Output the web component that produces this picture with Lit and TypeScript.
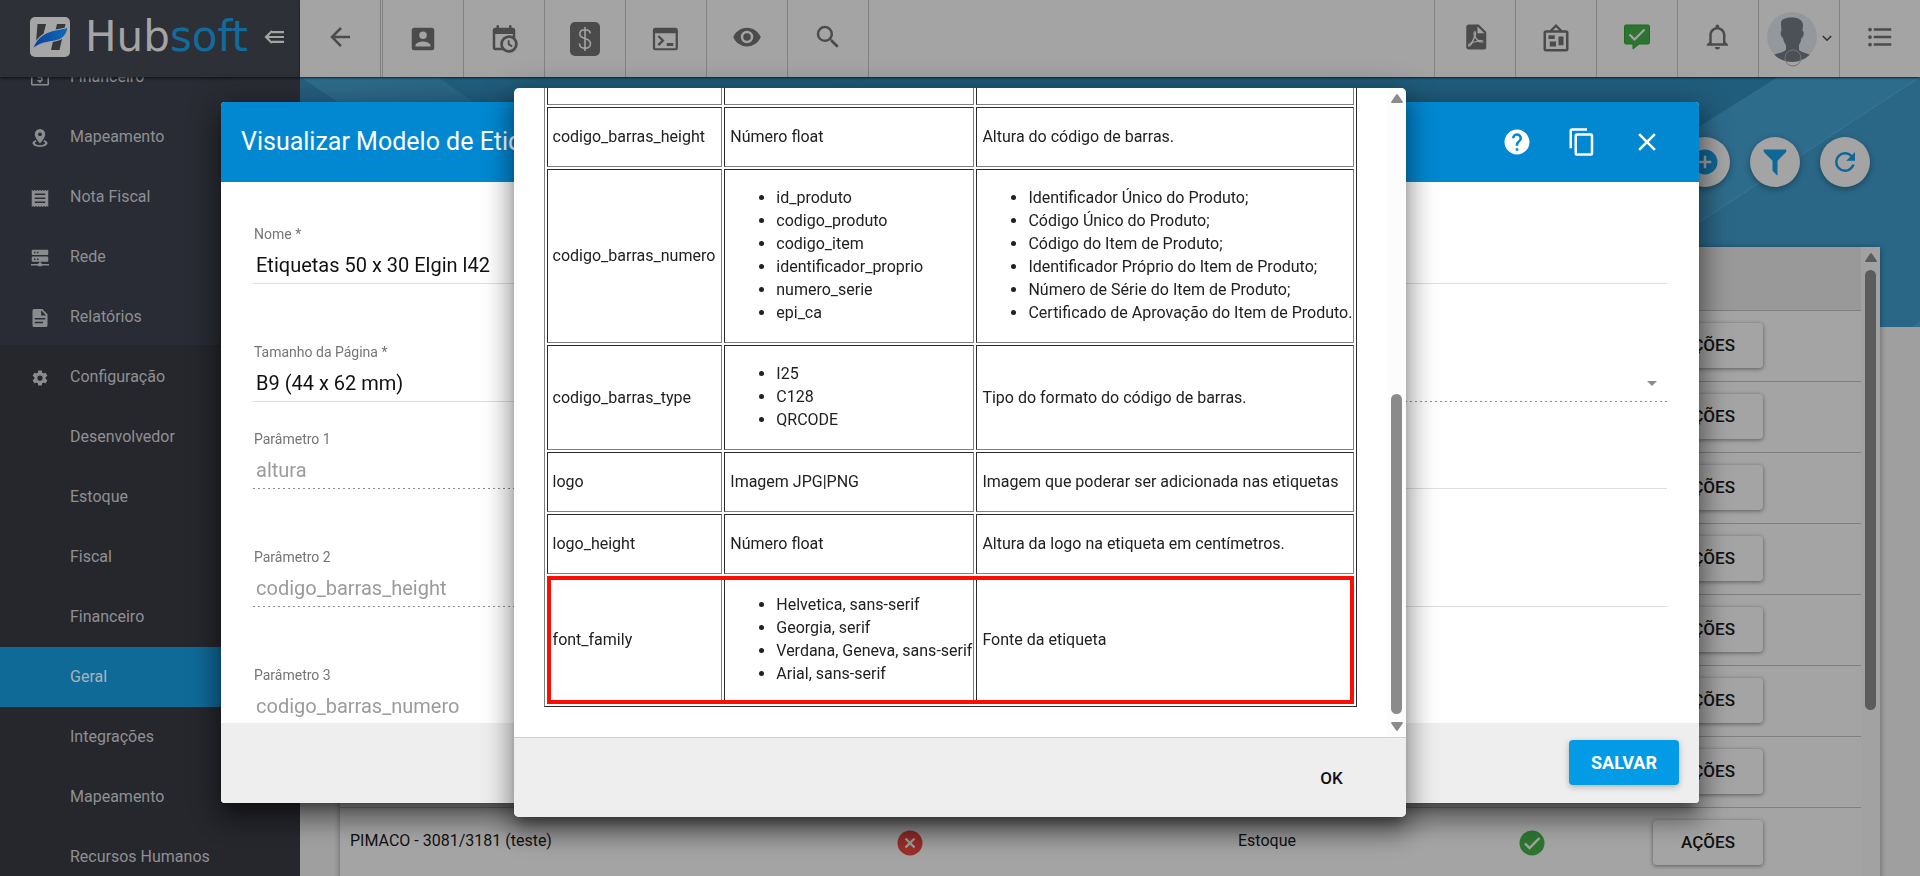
import { LitElement, html, css, svg, nothing } from "lit";
import { customElement, property } from "lit/decorators.js";

const ICONS: Record<string, string> = {
  arrowLeft: "M20,11V13H8L13.5,18.5L12.08,19.92L4.16,12L12.08,4.08L13.5,5.5L8,11H20Z",
  accountBox: "M6,17C6,15 10,13.9 12,13.9C14,13.9 18,15 18,17V18H6M15,9A3,3 0 0,1 12,12A3,3 0 0,1 9,9A3,3 0 0,1 12,6A3,3 0 0,1 15,9M3,5V19A2,2 0 0,0 5,21H19A2,2 0 0,0 21,19V5A2,2 0 0,0 19,3H5C3.89,3 3,3.9 3,5Z",
  calendarClock: "M15,13H16.5V15.82L18.94,17.23L18.19,18.53L15,16.69V13M19,8H5V19H9.67C9.24,18.09 9,17.07 9,16A7,7 0 0,1 16,9C17.07,9 18.09,9.24 19,9.67V8M5,21C3.89,21 3,20.1 3,19V5C3,3.89 3.89,3 5,3H6V1H8V3H16V1H18V3H19A2,2 0 0,1 21,5V11.1C22.24,12.36 23,14.09 23,16A7,7 0 0,1 16,23C14.09,23 12.36,22.24 11.1,21H5M16,11.15A4.85,4.85 0 0,0 11.15,16C11.15,18.68 13.32,20.85 16,20.85A4.85,4.85 0 0,0 20.85,16C20.85,13.32 18.68,11.15 16,11.15Z",
  console: "M3.500,3H19.500A2,2 0 0,1 21.500,5V19A2,2 0 0,1 19.500,21H3.500A2,2 0 0,1 1.500,19V5A2,2 0 0,1 3.500,3M3.300,7.4V19.300H19.700V7.4H3.300M5.2,10.2L6.5,8.9L10.8,13.2L6.5,17.5L5.2,16.2L8.2,13.2L5.2,10.2M12.6,15.2H17.8V17.5H12.6V15.2Z",
  eye: "M12,9A3,3 0 0,0 9,12A3,3 0 0,0 12,15A3,3 0 0,0 15,12A3,3 0 0,0 12,9M12,17A5,5 0 0,1 7,12A5,5 0 0,1 12,7A5,5 0 0,1 17,12A5,5 0 0,1 12,17M12,4.5C7,4.5 2.73,7.61 1,12C2.73,16.39 7,19.5 12,19.5C17,19.5 21.27,16.39 23,12C21.27,7.61 17,4.5 12,4.5Z",
  magnify: "M9.5,3A6.5,6.5 0 0,1 16,9.5C16,11.11 15.41,12.59 14.44,13.73L14.71,14H15.5L20.5,19L19,20.5L14,15.5V14.71L13.73,14.44C12.59,15.41 11.11,16 9.5,16A6.5,6.5 0 0,1 3,9.5A6.5,6.5 0 0,1 9.5,3M9.5,5C7,5 5,7 5,9.5C5,12 7,14 9.5,14C12,14 14,12 14,9.5C14,7 12,5 9.5,5Z",
  filePdf: "M14,9H19.5L14,3.5V9M7,2H15L21,8V20A2,2 0 0,1 19,22H7C5.89,22 5,21.1 5,20V4A2,2 0 0,1 7,2M11.93,12.44C12.34,13.34 12.86,14.08 13.46,14.59L13.87,14.91C13,15.07 11.8,15.35 10.53,15.84V15.84L10.42,15.88L10.92,14.84C11.37,13.97 11.7,13.18 11.93,12.44M18.41,16.25C18.59,16.07 18.68,15.84 18.69,15.59C18.72,15.39 18.67,15.2 18.57,15.04C18.28,14.57 17.53,14.35 16.29,14.35L15,14.42L14.13,13.84C13.5,13.32 12.93,12.41 12.53,11.28L12.57,11.14C12.9,9.81 13.21,8.2 12.55,7.54C12.39,7.38 12.17,7.3 11.94,7.3H11.7C11.33,7.3 11,7.69 10.91,8.07C10.54,9.4 10.76,10.13 11.13,11.34V11.35C10.88,12.23 10.56,13.25 10.05,14.28L9.09,16.08L8.2,16.57C7,17.32 6.43,18.16 6.32,18.69C6.28,18.88 6.3,19.05 6.37,19.23L6.4,19.28L6.88,19.59L7.32,19.7C8.13,19.7 9.05,18.75 10.29,16.63L10.47,16.56C11.5,16.23 12.78,16 14.5,15.81C15.53,16.32 16.74,16.55 17.5,16.55C17.94,16.55 18.24,16.44 18.41,16.25M18,15.54L18.09,15.65C18.08,15.75 18.05,15.76 18,15.78H17.96L17.77,15.8C17.31,15.8 16.6,15.61 15.87,15.29C15.96,15.19 16,15.19 16.1,15.19C17.5,15.19 17.9,15.44 18,15.54M8.83,17C8.18,18.19 7.59,18.85 7.14,19C7.19,18.62 7.64,17.96 8.35,17.31L8.83,17M11.85,10.09C11.62,9.19 11.61,8.46 11.78,8.04L11.85,7.92L12,7.97C12.17,8.21 12.19,8.53 12.09,9.07L12.06,9.23L11.9,10.05L11.85,10.09Z",
  bulletinBoard: "M12.04,2.5L9.53,5H14.53L12.04,2.5M4,7V20H20V7H4M12,0L17,5V5H20A2,2 0 0,1 22,7V20A2,2 0 0,1 20,22H4A2,2 0 0,1 2,20V7A2,2 0 0,1 4,5H7V5L12,0M7,18V14H12V18H7M14,17V10H18V17H14M6,12V9H11V12H6Z",
  bell: "M16,17H7V10.5C7,8 9,6 11.5,6C14,6 16,8 16,10.5M18,16V10.5C18,7.43 15.86,4.86 13,4.18V3.5A1.5,1.5 0 0,0 11.5,2A1.5,1.5 0 0,0 10,3.5V4.18C7.13,4.86 5,7.43 5,10.5V16L3,18V19H20V18M11.5,22A2,2 0 0,0 13.5,20H9.5A2,2 0 0,0 11.5,22Z",
  list: "M7,5H21V7H7V5M7,13V11H21V13H7M4,4.5A1.5,1.5 0 0,1 5.5,6A1.5,1.5 0 0,1 4,7.5A1.5,1.5 0 0,1 2.5,6A1.5,1.5 0 0,1 4,4.5M4,10.5A1.5,1.5 0 0,1 5.5,12A1.5,1.5 0 0,1 4,13.5A1.5,1.5 0 0,1 2.5,12A1.5,1.5 0 0,1 4,10.5M7,19V17H21V19H7M4,16.5A1.5,1.5 0 0,1 5.5,18A1.5,1.5 0 0,1 4,19.5A1.5,1.5 0 0,1 2.5,18A1.5,1.5 0 0,1 4,16.5Z",
  help: "M15.07,11.25L14.17,12.17C13.45,12.89 13,13.5 13,15H11V14.5C11,13.39 11.45,12.39 12.17,11.67L13.41,10.41C13.78,10.05 14,9.55 14,9C14,7.89 13.1,7 12,7A2,2 0 0,0 10,9H8A4,4 0 0,1 12,5A4,4 0 0,1 16,9C16,9.88 15.64,10.67 15.07,11.25M13,19H11V17H13M12,2A10,10 0 0,0 2,12A10,10 0 0,0 12,22A10,10 0 0,0 22,12C22,6.47 17.5,2 12,2Z",
  copy: "M19,21H8V7H19M19,5H8A2,2 0 0,0 6,7V21A2,2 0 0,0 8,23H19A2,2 0 0,0 21,21V7A2,2 0 0,0 19,5M16,1H4A2,2 0 0,0 2,3V17H4V3H16V1Z",
  close: "M19,6.41L17.59,5L12,10.59L6.41,5L5,6.41L10.59,12L5,17.59L6.41,19L12,13.41L17.59,19L19,17.59L13.41,12L19,6.41Z",
  plusCircle: "M17,13H13V17H11V13H7V11H11V7H13V11H17M12,2A10,10 0 0,0 2,12A10,10 0 0,0 12,22A10,10 0 0,0 22,12A10,10 0 0,0 12,2Z",
  filter: "M3,2H21V2H21V4H20.92L14,10.92V22.91L10,18.91V10.91L3.09,4H3V2Z",
  refresh: "M17.65,6.35C16.2,4.9 14.21,4 12,4A8,8 0 0,0 4,12A8,8 0 0,0 12,20C15.73,20 18.84,17.45 19.73,14H17.65C16.83,16.33 14.61,18 12,18A6,6 0 0,1 6,12A6,6 0 0,1 12,6C13.66,6 15.14,6.69 16.22,7.78L13,11H20V4L17.65,6.35Z",
  cash: "M2,3H4.5V5H2V20H22V5H19.5V3H22A2,2 0 0,1 24,5V20A2,2 0 0,1 22,22H2A2,2 0 0,1 0,20V5A2,2 0 0,1 2,3M11,4H13V6H15.5V8H10.5V10H14A1.5,1.5 0 0,1 15.5,11.5V15A1.5,1.5 0 0,1 14,16.5H13V18.5H11V16.5H8.5V14.5H13.5V12.2H10A1.5,1.5 0 0,1 8.5,10.7V7.5A1.5,1.5 0 0,1 10,6H11V4Z",
  mapPin: "M12,0A7,7 0 0,1 19,7C19,12 12,19.2 12,19.2C12,19.2 5,12 5,7A7,7 0 0,1 12,0M12,4.5A2.6,2.6 0 0,0 9.4,7.1A2.6,2.6 0 0,0 12,9.7A2.6,2.6 0 0,0 14.6,7.1A2.6,2.6 0 0,0 12,4.5M6.2,14.5L7.6,16.6C6.2,17.2 5.2,18 5.2,18.8C5.2,20.4 8.2,21.7 12,21.7C15.8,21.7 18.8,20.4 18.8,18.8C18.8,18 17.8,17.2 16.4,16.6L17.8,14.5C20.5,15.5 22,17 22,18.8C22,21.7 17.5,24 12,24C6.5,24 2,21.7 2,18.8C2,17 3.5,15.5 6.2,14.5Z",
  receipt: "M1,24V1L2.9,2.5L4.7,1L6.5,2.5L8.4,1L10.2,2.5L12,1L13.8,2.5L15.6,1L17.5,2.5L19.3,1L21.1,2.5L23,1V24L21.1,22.5L19.3,24L17.5,22.5L15.6,24L13.8,22.5L12,24L10.2,22.5L8.4,24L6.5,22.5L4.7,24L2.9,22.5M5,6V8H19V6H5M5,11.3V13.3H19V11.3H5M5,16.6V18.6H19V16.6H5Z",
  server: "M13,19H14A1,1 0 0,1 15,20H24V22H15A1,1 0 0,1 14,23H10A1,1 0 0,1 9,22H0V20H9A1,1 0 0,1 10,19H11V17H2A1,1 0 0,1 1,16V11A1,1 0 0,1 2,10H22A1,1 0 0,1 23,11V16A1,1 0 0,1 22,17H13V19M2,1H22A1,1 0 0,1 23,2V7A1,1 0 0,1 22,8H2A1,1 0 0,1 1,7V2A1,1 0 0,1 2,1M8,5.5H10V3.5H8V5.5M8,14.5H10V12.5H8V14.5M4,3.5V5.5H6V3.5H4M4,12.5V14.5H6V12.5H4Z",
  document: "M4,0H15L22,7V22A2,2 0 0,1 20,24H4A2,2 0 0,1 2,22V2A2,2 0 0,1 4,0M13.5,1.8V8.5H20.2L13.5,1.8M5,12V14H19V12H5M5,17V19H16V17H5Z",
  cog: "M12,15.5A3.5,3.5 0 0,1 8.5,12A3.5,3.5 0 0,1 12,8.5A3.5,3.5 0 0,1 15.5,12A3.5,3.5 0 0,1 12,15.5M19.43,12.97C19.47,12.65 19.5,12.33 19.5,12C19.5,11.67 19.47,11.34 19.43,11L21.54,9.37C21.73,9.22 21.78,8.95 21.66,8.73L19.66,5.27C19.54,5.05 19.27,4.96 19.05,5.05L16.56,6.05C16.04,5.66 15.5,5.32 14.87,5.07L14.5,2.42C14.46,2.18 14.25,2 14,2H10C9.75,2 9.54,2.18 9.5,2.42L9.13,5.07C8.5,5.32 7.96,5.66 7.44,6.05L4.95,5.05C4.73,4.96 4.46,5.05 4.34,5.27L2.34,8.73C2.21,8.95 2.27,9.22 2.46,9.37L4.57,11C4.53,11.34 4.5,11.67 4.5,12C4.5,12.33 4.53,12.65 4.57,12.97L2.46,14.63C2.27,14.78 2.21,15.05 2.34,15.27L4.34,18.73C4.46,18.95 4.73,19.03 4.95,18.95L7.44,17.94C7.96,18.34 8.5,18.68 9.13,18.93L9.5,21.58C9.54,21.82 9.75,22 10,22H14C14.25,22 14.46,21.82 14.5,21.58L14.87,18.93C15.5,18.67 16.04,18.34 16.56,17.94L19.05,18.95C19.27,19.03 19.54,18.95 19.66,18.73L21.66,15.27C21.78,15.05 21.73,14.78 21.54,14.63L19.43,12.97Z",
};

/* A single-path 24-unit glyph that takes its colour and size from the host. */
@customElement("hs-icon")
class HsIcon extends LitElement {
  @property() name = "";
  static styles = css`
    :host { display: block; width: 30px; height: 30px; flex: none; }
    svg { display: block; width: 100%; height: 100%; overflow: visible; }
  `;
  render() {
    return html`<svg viewBox="0 0 24 24" aria-hidden="true">
      <path fill="currentColor" fill-rule="evenodd" d=${ICONS[this.name] ?? ""}></path>
    </svg>`;
  }
}

/* Classic scrollbar gutter; the thumb position is given in percent of the rail. */
@customElement("hs-scrollbar")
class HsScrollbar extends LitElement {
  @property({ type: Number }) start = 0;
  @property({ type: Number }) size = 50;
  static styles = css`
    :host { display: flex; flex-direction: column; align-items: center; flex: none; width: 19px; box-sizing: border-box; padding: 6px 0; gap: 8px; color: #8b8b8b; }
    svg { display: block; width: 12px; height: 9px; flex: none; fill: currentColor; }
    .rail { flex: 1; width: 11px; }
    .space { display: block; }
    .thumb { border-radius: 6px; background: currentColor; }
  `;
  render() {
    return html`
      <svg viewBox="0 0 12 9"><path d="M5 .8a1.2 1.2 0 0 1 2 0l4.8 7q.4 1.2-.8 1.2H1q-1.200 0-.8-1.200z"></path></svg>
      <div class="rail">
        <div class="space" style="height:${this.start}%"></div>
        <div class="thumb" style="height:${this.size}%"></div>
      </div>
      <svg viewBox="0 0 12 9"><path d="M5 8.200a1.200 1.200 0 0 0 2 0l4.800-7Q12.200 0 11 0H1Q-.2 0 .2 1.200z"></path></svg>
    `;
  }
}

@customElement("hs-sidebar")
class HsSidebar extends LitElement {
  static styles = css`
    :host { display: flex; flex-direction: column; width: 300px; flex: none; height: 100vh; overflow: hidden; background: #292c34; color: #8f9092; }
    .brand { display: flex; align-items: center; height: 77px; flex: none; box-sizing: border-box; padding: 0 16px 3px 30px; background: #2e3037; position: relative; z-index: 1; box-shadow: 0 1px 3px rgba(0,0,0,.7); }
    .mark { width: 40px; height: 40px; flex: none; }
    .name { flex: 1; padding-left: 15px; font: 42px/40px "DejaVu Sans", sans-serif; color: #a4a4a4; }
    .name span { color: #116b9b; }
    .fold { border: 0; padding: 0; background: none; color: #a4a4a4; width: 20px; height: 16px; flex: none; }
    .fold svg { display: block; }
    nav { margin-top: -30px; }
    a { display: flex; align-items: center; box-sizing: border-box; height: 60px; padding-left: 30px; gap: 20px; color: inherit; text-decoration: none; font-size: 16px; line-height: 20px; }
    a hs-icon { width: 18px; height: 18px; margin: 2px 1px 0; color: #8b8c8e; }
    a.sub { padding-left: 70px; }
    a.active { background: #106a98; color: #a9b4b9; }
    .group { background: #26272d; box-shadow: 0 -1px 2px rgba(0,0,0,.25); }
  `;
  render() {
    const top = [["cash", "Financeiro"], ["mapPin", "Mapeamento"], ["receipt", "Nota Fiscal"], ["server", "Rede"], ["document", "Relatórios"]];
    const sub = ["Desenvolvedor", "Estoque", "Fiscal", "Financeiro", "Geral", "Integrações", "Mapeamento", "Recursos Humanos"];
    return html`
      <div class="brand">
        <svg class="mark" viewBox="0 0 40 40" aria-hidden="true">
          <defs><linearGradient id="wave"><stop offset="0" stop-color="#0c3f9c"></stop><stop offset="1" stop-color="#0d6cb8"></stop></linearGradient></defs>
          <rect width="40" height="40" rx="5" fill="#a6a6a6"></rect>
          <path fill="#36373a" d="M7.500 7h8.500l-3 12-7 6zM27 7h8.500l-6 26H21z"></path>
          <path fill="url(#wave)" stroke="#a6a6a6" stroke-width="1.200" d="M2 33.500C5 23 13 16 23 13.500C29 12 34 12 38 10C37.500 16 35 20 30 22.500C20 26 8 25 2 33.500z"></path>
        </svg>
        <div class="name">Hub<span>soft</span></div>
        <button class="fold" aria-label="Recolher menu">
          <svg width="20" height="16" viewBox="0 0 20 16" fill="none" stroke="currentColor" stroke-width="2.200">
            <path d="M8 2L2 8l6 6M8 3.200h12M3 8h17M8 12.800h12"></path>
          </svg>
        </button>
      </div>
      <nav>
        ${top.map(([icon, label]) => html`<a href="#"><hs-icon name=${icon}></hs-icon>${label}</a>`)}
        <div class="group">
          <a href="#"><hs-icon name="cog"></hs-icon>Configuração</a>
          ${sub.map((label) => html`<a href="#" class=${label === "Geral" ? "sub active" : "sub"}>${label}</a>`)}
        </div>
      </nav>
    `;
  }
}

@customElement("hs-topbar")
class HsTopbar extends LitElement {
  static styles = css`
    :host { display: flex; height: 77px; flex: none; background: #a4a4a4; color: #4b4b4b; position: relative; z-index: 1; box-shadow: 0 1px 2px rgba(0,20,35,.8); }
    button { display: flex; align-items: center; justify-content: center; box-sizing: border-box; width: 81px; height: 77px; padding: 0; border: 0; background: none; color: inherit; border-right: 1px solid #828282; }
    .back { width: 83px; border-right: 3px double #828282; }
    .spacer { flex: 1; }
    .right button { border-right: 0; border-left: 1px solid #828282; }
    .right { display: flex; }
    .lift { margin-bottom: 3px; }
    .user { gap: 5px; }
    .chevron { flex: none; }
  `;
  render() {
    return html`
      <button class="back" aria-label="Voltar"><hs-icon class="lift" name="arrowLeft"></hs-icon></button>
      <button aria-label="Clientes"><hs-icon name="accountBox"></hs-icon></button>
      <button aria-label="Agenda"><hs-icon name="calendarClock"></hs-icon></button>
      <button aria-label="Financeiro">
        <svg width="30" height="36" viewBox="0 0 30 36" fill="none">
          <rect y="1" width="30" height="34" rx="5" fill="#4b4b4b"></rect>
          <path stroke="#a4a4a4" stroke-width="1.600" d="M15 6v24M20.200 12.500C20.200 9.800 18 8.700 15 8.700S9.800 10 9.800 12.900C9.800 19 20.500 16 20.500 22.600C20.500 25.600 18 27.300 15 27.300S9.400 25.600 9.400 22.600"></path>
        </svg>
      </button>
      <button aria-label="Console"><hs-icon name="console"></hs-icon></button>
      <button aria-label="Visualizar"><hs-icon class="lift" name="eye"></hs-icon></button>
      <button aria-label="Pesquisar"><hs-icon class="lift" name="magnify"></hs-icon></button>
      <div class="spacer"></div>
      <div class="right">
        <button aria-label="PDF"><hs-icon class="lift" name="filePdf"></hs-icon></button>
        <button aria-label="Mural"><hs-icon name="bulletinBoard"></hs-icon></button>
        <button aria-label="Status">
          <svg class="lift" width="26" height="26" viewBox="0 0 26 26">
            <path fill="#2d7431" stroke="#1b6a20" d="M2 1h22a1.500 1.500 0 0 1 1.500 1.500v16A1.500 1.500 0 0 1 24 20h-9l-6 5v-5H2A1.500 1.500 0 0 1 .5 18.500v-16A1.500 1.500 0 0 1 2 1z"></path>
            <path fill="none" stroke="#a4a4a4" stroke-width="2.200" d="M5.500 10.500l5 5L20.500 5.500"></path>
          </svg>
        </button>
        <button aria-label="Notificações"><hs-icon class="lift" name="bell"></hs-icon></button>
        <button class="user" aria-label="Usuário">
          <svg width="50" height="56" viewBox="0 0 50 56">
            <defs><clipPath id="face"><circle cx="25" cy="26" r="25"></circle></clipPath></defs>
            <circle cx="25" cy="26" r="25" fill="#94979b"></circle>
            <path clip-path="url(#face)" fill="#4c5157" d="M14 12C14 8 19 6.500 25 6.500S36 9 36 14L35.500 20C37.500 20 37 26 34.500 27C34 30 33.200 32 32 34V39C35 42 42 42 46 46V56H4V46C8 42 16 42 19 39V34C17.500 32 16.500 30 16 27C13.500 26 13 20 14.500 20Z"></path>
            <circle cx="26" cy="47" r="8" fill="none" stroke="#77736c"></circle>
          </svg>
          <svg class="chevron" width="10" height="7" viewBox="0 0 10 7"><path fill="none" stroke="#333" stroke-width="1.600" d="M.8 1l4.200 4.200L9.200 1"></path></svg>
        </button>
        <button aria-label="Lista"><hs-icon class="lift" name="list"></hs-icon></button>
      </div>
    `;
  }
}

/* Listing page behind the dialogs. */
@customElement("hs-listing")
class HsListing extends LitElement {
  static styles = css`
    :host { display: flex; flex-direction: column; flex: 1; min-height: 0; background: #9f9f9f; position: relative; overflow: hidden; color: #111; }
    .banner { position: absolute; inset: 0 0 auto 0; width: 100%; height: 250px; }
    .tools { display: flex; justify-content: flex-end; gap: 20px; padding: 60px 50px; position: relative; }
    .tools button { display: flex; align-items: center; justify-content: center; width: 50px; height: 50px; padding: 0; border: 0; border-radius: 50%; background: #a4a4a4; color: #0f6798; box-shadow: 0 2px 6px rgba(0,0,0,.35); }
    .card { display: flex; flex: 1; min-height: 0; margin: 0 40px -20px; background: #a4a4a4; position: relative; box-shadow: 0 1px 6px rgba(0,0,0,.4); }
    .view { flex: 1; overflow: hidden; }
    hs-scrollbar { color: #5c5c5c; background: #a2a2a2; }
    table { width: 100%; border-collapse: separate; border-spacing: 0; table-layout: fixed; font-size: 16px; line-height: 20px; }
    th { height: 64px; box-sizing: border-box; padding: 0; background: #999; border-bottom: 1px solid #7f7f7f; }
    td { height: 71px; box-sizing: border-box; padding: 0 10px 4px; border-bottom: 1px solid #7f7f7f; }
    .name { width: 252px; } .kind { width: 204px; } .state { width: 200px; } .act { width: 229px; }
    .mid { text-align: center; padding-bottom: 0; }
    .mid svg { display: inline-block; vertical-align: middle; }
    .go { padding: 0 21px 2px; }
    .go button { display: block; width: 110px; height: 45px; padding: 0; border: 0; border-radius: 4px; background: #a4a4a4; color: #111; font: 500 17px/20px Roboto, sans-serif; box-shadow: 0 1px 4px rgba(0,0,0,.45); }
  `;
  render() {
    const blank = { name: "", kind: "" };
    const items = [blank, blank, blank, blank, blank, blank, blank, { name: "PIMACO - 3081/3181 (teste)", kind: "Estoque" }];
    const disc = (fill: string, d: string) => svg`<svg width="26" height="26" viewBox="0 0 26 26"><circle cx="13" cy="13" r="12.500" fill=${fill}></circle><path fill="none" stroke="#a4a4a4" stroke-width="2.400" d=${d}></path></svg>`;
    return html`
      <svg class="banner" viewBox="0 0 1620 250" preserveAspectRatio="none" aria-hidden="true">
        <defs>
          <linearGradient id="sea"><stop offset="0" stop-color="#205f7e"></stop><stop offset=".9" stop-color="#205d7d"></stop></linearGradient>
          <linearGradient id="lit"><stop offset="0" stop-color="#2f6d8c"></stop><stop offset="1" stop-color="#235f7e"></stop></linearGradient>
        </defs>
        <rect width="1620" height="250" fill="url(#sea)"></rect>
        <path fill="url(#lit)" d="M0 0H138L350 150H226z"></path>
        <path fill="#265f7e" d="M0 0L226 150H0z"></path>
        <path fill="#2e6c8c" d="M1478 0H1620V0L1240 250H1080z"></path>
        <path fill="#2a6787" d="M1620 0V250H1240z"></path>
        <path stroke="#39789a" d="M1620 0L1240 250"></path>
        <path fill="#356f8d" d="M1612 250L1620 244V250z"></path>
      </svg>
      <div class="tools">
        <button aria-label="Adicionar"><hs-icon name="plusCircle"></hs-icon></button>
        <button aria-label="Filtrar"><hs-icon name="filter"></hs-icon></button>
        <button aria-label="Atualizar"><hs-icon name="refresh"></hs-icon></button>
      </div>
      <div class="card">
        <div class="view">
          <table>
            <thead><tr><th class="name"></th><th></th><th class="kind"></th><th class="state"></th><th class="act"></th></tr></thead>
            <tbody>
              ${items.map((item) => html`<tr>
                <td>${item.name}</td>
                <td class="mid">${disc("#9c2f2b", "M8.500 8.500l9 9M17.500 8.500l-9 9")}</td>
                <td>${item.kind}</td>
                <td class="mid">${disc("#2d7431", "M6 13.500l4.500 4.500L20.500 8")}</td>
                <td class="go"><button>AÇÕES</button></td>
              </tr>`)}
            </tbody>
          </table>
        </div>
        <hs-scrollbar .start=${0} .size=${73}></hs-scrollbar>
      </div>
    `;
  }
}

@customElement("hs-form-dialog")
class HsFormDialog extends LitElement {
  static styles = css`
    :host { display: flex; flex-direction: column; width: calc(100vw - 442px); height: 80vh; border-radius: 4px; overflow: hidden; background: #fff; box-shadow: 0 9px 10px -5px rgba(0,0,0,.3), 0 16px 24px 3px rgba(0,0,0,.28), 0 6px 30px 5px rgba(0,0,0,.28); }
    header { display: flex; align-items: center; height: 80px; flex: none; padding: 0 37px 0 20px; background: #0288d1; color: #fff; }
    h2 { flex: 1; margin: 0; font-size: 25px; font-weight: 400; line-height: 32px; }
    header button { padding: 0; border: 0; background: none; color: inherit; }
    .acts { display: flex; gap: 35px; }
    form { flex: 1; min-height: 0; overflow: hidden; display: grid; grid-template-columns: 1fr 1fr; column-gap: 40px; align-content: start; padding: 40px 32px 0; }
    .field { display: flex; flex-direction: column; justify-content: flex-end; height: 62px; margin-bottom: 56px; }
    .tight { margin-bottom: 25px; }
    label { height: 24px; padding-left: 1px; font-size: 14px; line-height: 24px; color: #757575; }
    .line { display: flex; align-items: center; box-sizing: border-box; height: 38px; border-bottom: 1px solid #dedede; }
    .dotted { border-bottom: 0; background: repeating-linear-gradient(90deg, #8c8c8c 0 2px, transparent 2px 5px) bottom / 100% 1px no-repeat; }
    input, select { flex: 1; min-width: 0; height: 36px; padding: 0 3px; border: 0; outline: 0; background: transparent; font: 20px/36px Roboto, sans-serif; color: #111; appearance: none; }
    input:disabled, select:disabled { color: #9b9b9b; opacity: 1; }
    .arrow { width: 0; height: 0; margin-right: 10px; border: 5px solid transparent; border-top-color: #8b8b8b; border-bottom: 0; }
    footer { display: flex; align-items: center; justify-content: flex-end; height: 80px; flex: none; padding-right: 20px; background: #eee; }
    footer button { width: 110px; height: 45px; padding: 1px 0 0; border: 0; border-radius: 4px; background: #039be5; color: #fff; font: 700 18px/24px Roboto, sans-serif; box-shadow: 0 2px 6px rgba(0,0,0,.26); }
  `;
  render() {
    const rows = [
      { id: "nome", label: "Nome *", value: "Etiquetas 50 x 30 Elgin l42" },
      { id: "tamanho", label: "Tamanho da Página *", value: "B9 (44 x 62 mm)", select: true, tight: true },
      { id: "p1", label: "Parâmetro 1", value: "altura", off: true },
      { id: "p2", label: "Parâmetro 2", value: "codigo_barras_height", off: true },
      { id: "p3", label: "Parâmetro 3", value: "codigo_barras_numero", off: true },
    ];
    return html`
      <header>
        <h2>Visualizar Modelo de Etiqueta</h2>
        <div class="acts">
          <button aria-label="Ajuda"><hs-icon name="help"></hs-icon></button>
          <button aria-label="Copiar"><hs-icon name="copy"></hs-icon></button>
          <button aria-label="Fechar"><hs-icon name="close"></hs-icon></button>
        </div>
      </header>
      <form>
        ${rows.map((r) => html`
          <div class="field ${r.tight ? "tight" : ""}">
            <label for=${r.id}>${r.label}</label>
            <div class="line ${r.off ? "dotted" : ""}">
              ${r.select
                ? html`<select id=${r.id}><option>${r.value}</option></select>`
                : html`<input id=${r.id} .value=${r.value} ?disabled=${!!r.off}>`}
            </div>
          </div>
          <div class="field ${r.tight ? "tight" : ""}">
            <div class="line ${r.select ? "dotted" : ""}">
              ${r.select
                ? html`<select aria-label="Tipo" disabled></select><span class="arrow"></span>`
                : html`<input aria-label="Valor">`}
            </div>
          </div>
        `)}
      </form>
      <footer><button>SALVAR</button></footer>
    `;
  }
}

@customElement("hs-help-dialog")
class HsHelpDialog extends LitElement {
  static styles = css`
    :host { display: flex; flex-direction: column; height: calc(100vh - 147px); border-radius: 5px; overflow: hidden; background: #fff; color: #212121; box-shadow: 0 9px 10px -5px rgba(0,0,0,.3), 0 16px 24px 3px rgba(0,0,0,.24), 0 6px 30px 5px rgba(0,0,0,.24); }
    .body { display: flex; flex: 1; min-height: 0; border-bottom: 1px solid #d0d0d0; }
    .view { display: flex; flex-direction: column; justify-content: flex-end; overflow: hidden; padding: 0 30px 30px; }
    hs-scrollbar { background: #fcfcfc; }
    table { border: 1px solid; border-color: #808080 #2b2b2b #2b2b2b #808080; border-spacing: 2px; font-size: 16px; line-height: 23px; white-space: nowrap; }
    td { padding: 1px; border: 1px solid; border-color: #2b2b2b #808080 #808080 #2b2b2b; }
    p { min-height: 23px; margin: 16px 0 17px; padding: 0 5px 0 4px; }
    ul { margin: 15px 0 17px; padding: 0 0 0 50px; }
    .marked { outline: 4px solid #ff0d00; outline-offset: -4px; }
    footer { display: flex; align-items: center; justify-content: flex-end; height: 79px; flex: none; padding-right: 50px; background: #eee; }
    footer button { width: 50px; height: 45px; padding: 0; border: 0; background: none; color: #111; font: 500 17px/20px Roboto, sans-serif; }
  `;
  render() {
    const rows: { key: string; values: string | string[]; text: string | string[]; marked?: boolean }[] = [
      { key: "", values: "", text: "" },
      { key: "codigo_barras_height", values: "Número float", text: "Altura do código de barras." },
      {
        key: "codigo_barras_numero",
        values: ["id_produto", "codigo_produto", "codigo_item", "identificador_proprio", "numero_serie", "epi_ca"],
        text: ["Identificador Único do Produto;", "Código Único do Produto;", "Código do Item de Produto;", "Identificador Próprio do Item de Produto;", "Número de Série do Item de Produto;", "Certificado de Aprovação do Item de Produto."],
      },
      { key: "codigo_barras_type", values: ["I25", "C128", "QRCODE"], text: "Tipo do formato do código de barras." },
      { key: "logo", values: "Imagem JPG|PNG", text: "Imagem que poderar ser adicionada nas etiquetas" },
      { key: "logo_height", values: "Número float", text: "Altura da logo na etiqueta em centímetros." },
      { key: "font_family", values: ["Helvetica, sans-serif", "Georgia, serif", "Verdana, Geneva, sans-serif", "Arial, sans-serif"], text: "Fonte da etiqueta", marked: true },
    ];
    const cell = (v: string | string[]) =>
      Array.isArray(v) ? html`<ul>${v.map((i) => html`<li>${i}</li>`)}</ul>` : html`<p>${v}</p>`;
    return html`
      <div class="body">
        <div class="view">
          <table>
            <tbody>
              ${rows.map((r) => html`<tr class=${r.marked ? "marked" : nothing}>
                <td>${cell(r.key)}</td><td>${cell(r.values)}</td><td>${cell(r.text)}</td>
              </tr>`)}
            </tbody>
          </table>
        </div>
        <hs-scrollbar .start=${47} .size=${53}></hs-scrollbar>
      </div>
      <footer><button>OK</button></footer>
    `;
  }
}

@customElement("app-root")
class AppRoot extends LitElement {
  static styles = css`
    :host { display: flex; height: 100vh; overflow: hidden; font-family: Roboto, sans-serif; }
    .main { display: flex; flex-direction: column; flex: 1; min-width: 0; }
    .layer { position: fixed; inset: 0; z-index: 2; display: grid; place-items: center; padding-top: 29px; }
  `;
  render() {
    return html`
      <hs-sidebar></hs-sidebar>
      <div class="main">
        <hs-topbar></hs-topbar>
        <hs-listing></hs-listing>
      </div>
      <div class="layer"><hs-form-dialog role="dialog"></hs-form-dialog></div>
      <div class="layer"><hs-help-dialog role="alertdialog"></hs-help-dialog></div>
    `;
  }
}
